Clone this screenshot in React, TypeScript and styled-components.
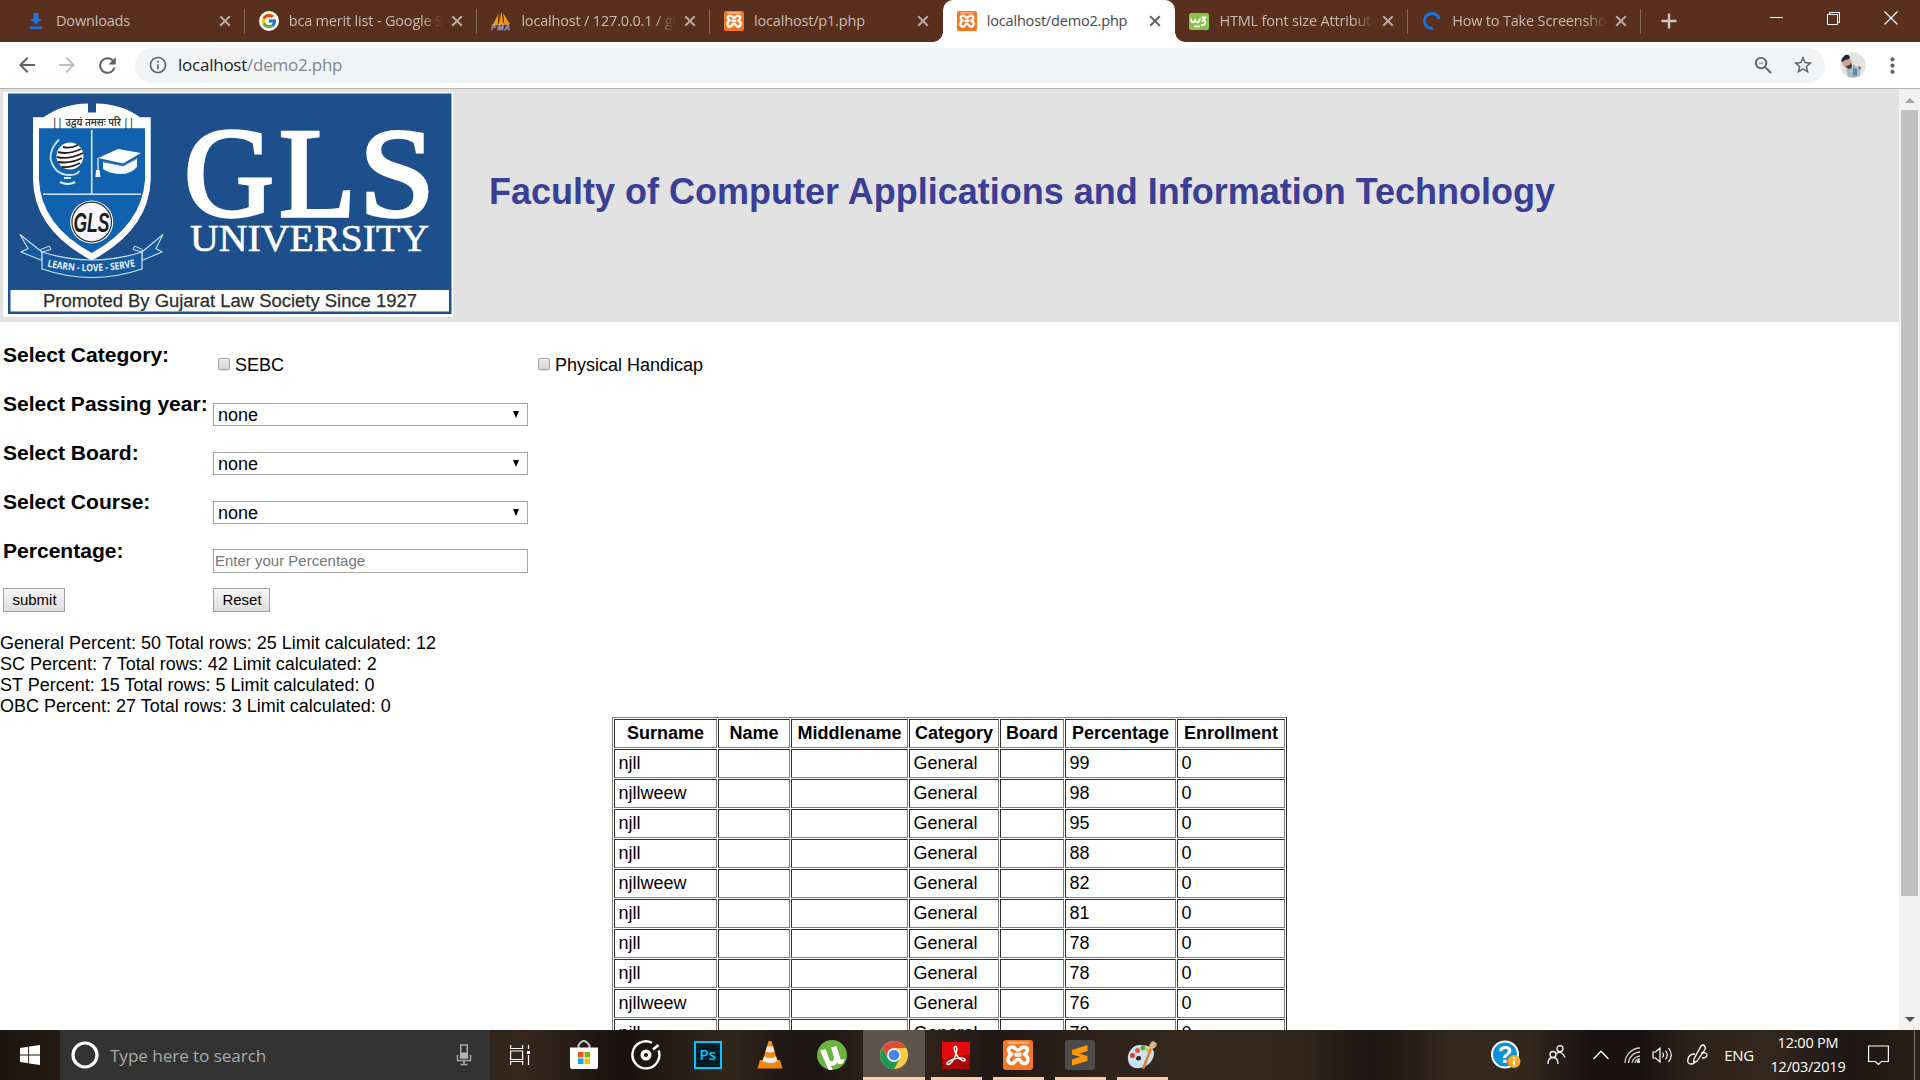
import React from "react";
import styled, { createGlobalStyle } from "styled-components";
import { FcGoogle } from "react-icons/fc";
import {
  MdArrowBack,
  MdArrowForward,
  MdRefresh,
  MdInfoOutline,
  MdZoomOut,
  MdStarBorder,
  MdMoreVert,
} from "react-icons/md";

const GlobalStyle = createGlobalStyle`
  * { box-sizing: border-box; }
  body { margin: 0; overflow: hidden; background: #fff; }
`;

const UI_FONT = `"Open Sans", "Noto Sans", sans-serif`;

const Screen = styled.div`
  width: 1920px;
  height: 1080px;
  display: flex;
  flex-direction: column;
  overflow: hidden;
  font-family: "Liberation Sans", Arial, sans-serif;
  color: #000;
`;

/* ---------- browser chrome ---------- */

const TabStrip = styled.div`
  flex: none;
  height: 42px;
  display: flex;
  align-items: stretch;
  padding-left: 12px;
  background: #59301e;
  font-family: ${UI_FONT};
`;

const Tab = styled.div<{ $active?: boolean; $separator?: boolean }>`
  position: relative;
  width: 232.7px;
  display: flex;
  align-items: center;
  padding: 0 11px 0 14px;
  background: ${(p) => (p.$active ? "#fff" : "transparent")};
  color: ${(p) => (p.$active ? "#45474a" : "#c8bab3")};
  border-radius: 10px 10px 0 0;
  &::after {
    content: "";
    display: ${(p) => (p.$separator ? "block" : "none")};
    position: absolute;
    right: 0;
    top: 9px;
    width: 1px;
    height: 25px;
    background: #836a5f;
  }
`;

const TabFoot = styled.i<{ $side: "left" | "right" }>`
  position: absolute;
  bottom: 0;
  ${(p) => p.$side}: -10px;
  width: 10px;
  height: 10px;
  background: radial-gradient(
    circle at ${(p) => (p.$side === "left" ? "0 0" : "10px 0")},
    transparent 9.5px,
    #fff 10px
  );
`;

const TabIcon = styled.span`
  flex: none;
  width: 20px;
  height: 20px;
  margin-right: 10px;
  display: flex;
  align-items: center;
  justify-content: center;
`;

const TabTitle = styled.span<{ $fade?: boolean }>`
  flex: 1;
  overflow: hidden;
  white-space: nowrap;
  font-size: 14.5px;
  line-height: 24px;
  letter-spacing: -0.18px;
  margin-top: -1px;
  ${(p) => p.$fade && "mask-image: linear-gradient(90deg, #000 86%, transparent 100%);"}
`;

const TabClose = styled.span`
  flex: none;
  width: 18px;
  height: 18px;
  margin-left: 5px;
  display: flex;
  align-items: center;
  justify-content: center;
`;

const NewTab = styled.div`
  width: 56px;
  display: flex;
  align-items: center;
  justify-content: center;
`;

const WindowButtons = styled.div`
  margin-left: auto;
  display: flex;
  height: 36px;
  padding-right: 1px;
`;

const WindowButton = styled.div`
  width: 57px;
  display: flex;
  align-items: center;
  justify-content: center;
`;

const Toolbar = styled.div`
  flex: none;
  height: 47px;
  display: flex;
  align-items: center;
  padding-left: 7px;
  background: #fff;
  border-bottom: 1px solid #b5b5b5;
`;

const NavButton = styled.div<{ $disabled?: boolean }>`
  width: 40px;
  display: flex;
  justify-content: center;
  color: ${(p) => (p.$disabled ? "#bcbec0" : "#5f6368")};
`;

const Omnibox = styled.div`
  width: 1690px;
  height: 35px;
  margin-left: 8px;
  padding: 0 10px 0 13px;
  display: flex;
  align-items: center;
  border-radius: 18px;
  background: #f1f3f4;
  color: #5f6368;
  font-family: ${UI_FONT};
`;

const Url = styled.span`
  flex: 1;
  margin-left: 10px;
  margin-top: -1px;
  font-size: 17px;
  letter-spacing: -0.24px;
  color: #80868b;
  b { font-weight: 400; color: #202124; }
`;

const OmniAction = styled.span`
  width: 40px;
  display: flex;
  justify-content: center;
  &:last-child { width: 24px; margin-left: 8px; }
`;

const AvatarSlot = styled.div`
  width: 55px;
  display: flex;
  justify-content: center;
`;

/* ---------- page ---------- */

const Viewport = styled.div`
  flex: 1;
  min-height: 0;
  display: flex;
  overflow: hidden;
`;

const Page = styled.main`
  width: 1899px;
  overflow: hidden;
  font-size: 18px;
  line-height: 21px;
`;

const Banner = styled.header`
  height: 233px;
  padding: 3px;
  display: flex;
  background: #e2e2e2;
`;

const BannerTitle = styled.h1`
  margin: 79px 0 0 36px;
  font-size: 36px;
  line-height: 42px;
  white-space: nowrap;
  color: #3a3f95;
`;

const Form = styled.form`
  height: 311px;
  padding: 8px 3px 0;
`;

const Field = styled.div`
  height: 49px;
  display: grid;
  grid-template-columns: 210px 315px auto;
  align-items: end;
`;

const Label = styled.h3`
  align-self: center;
  margin: 0;
  font-size: 21.06px;
  line-height: 24px;
  white-space: nowrap;
`;

const Check = styled.label<{ $indent: number }>`
  display: flex;
  align-items: center;
  gap: 5px;
  padding-left: ${(p) => p.$indent}px;
  margin-bottom: 3px;
`;

const CheckBox = styled.i`
  width: 12px;
  height: 12px;
  margin-top: -4px;
  border: 1px solid #a5a5a5;
  border-radius: 2px;
  background: linear-gradient(#e9e9e9, #d9d9d9);
  box-shadow: 0 1px 1px #ddd;
`;

const Select = styled.div`
  height: 23px;
  margin-bottom: 2px;
  padding: 1px 8px 0 4px;
  display: flex;
  align-items: center;
  justify-content: space-between;
  border: 1px solid #a6a6a6;
  background: #fff;
`;

const Caret = styled.i`
  width: 0;
  height: 0;
  margin-top: -2px;
  border: 3.5px solid transparent;
  border-top: 7px solid #000;
  border-bottom: 0;
`;

const Input = styled.input`
  width: 315px;
  height: 24px;
  margin: 0 0 2px;
  padding: 0 1px 2px;
  border: 1px solid #a6a6a6;
  font: 15px "Liberation Sans", Arial, sans-serif;
  &::placeholder { color: #757575; }
`;

const Buttons = styled.div`
  display: grid;
  grid-template-columns: 210px 315px;
  justify-items: start;
  padding-top: 13px;
`;

const Button = styled.button<{ $width: number }>`
  width: ${(p) => p.$width}px;
  height: 24px;
  padding: 0 0 2px 1px;
  border: 1px solid #a0a0a0;
  border-radius: 0;
  background: linear-gradient(#f6f6f6, #dedede);
  color: #000;
  font: 15px "Liberation Sans", Arial, sans-serif;
`;

const Summary = styled.div`
  white-space: nowrap;
`;

const Results = styled.table`
  width: 675px;
  margin: 0 auto;
  table-layout: fixed;
  border-collapse: separate;
  border-spacing: 1px;
  border: 1px solid;
  border-color: #808080 #2c2c2c #2c2c2c #808080;
  font-size: 18px;
  line-height: 21px;
`;

const cell = `
  height: 29px;
  padding: 0 3px 1px 3.5px;
  border: 1px solid;
  border-color: #2c2c2c #808080 #808080 #2c2c2c;
  white-space: nowrap;
`;
const Th = styled.th`${cell} padding-left: 0; padding-right: 0; text-align: center;`;
const Td = styled.td`${cell}`;
const Col = styled.col<{ $w: number }>`width: ${(p) => p.$w}px;`;

const Scrollbar = styled.div`
  width: 21px;
  display: flex;
  flex-direction: column;
  align-items: center;
  background: #f1f1f1;
`;

const ScrollArrow = styled.div<{ $down?: boolean }>`
  width: 21px;
  height: 21px;
  display: flex;
  align-items: center;
  justify-content: center;
  margin-top: ${(p) => (p.$down ? "auto" : "0")};
  &::before {
    content: "";
    border: 5px solid transparent;
    ${(p) =>
      p.$down
        ? "border-top-color: #505050; border-bottom: 0;"
        : "border-bottom-color: #a3a3a3; border-top: 0; margin-top: 2px;"}
  }
`;

const Thumb = styled.div`
  width: 17px;
  height: 786px;
  background: #c1c1c1;
`;

/* ---------- taskbar ---------- */

const Taskbar = styled.footer`
  flex: none;
  height: 50px;
  display: flex;
  align-items: stretch;
  color: #fff;
  font-family: ${UI_FONT};
  background: linear-gradient(
    90deg,
    #1a1410 0, #241a13 50px, #30241a 490px, #36281d 520px, #221814 590px, #17110f 625px,
    #2b2018 690px, #32261c 730px, #1e1614 790px, #1d1514 820px, #33261c 890px, #2a1f18 960px,
    #201715 990px, #2c211a 1080px, #35281e 1180px, #33261c 1300px, #1c1513 1370px,
    #281d17 1410px, #35281e 1450px, #33261c 1530px, #181312 1590px, #171211 1640px,
    #2d2119 1690px, #35281e 1770px, #1b1513 1850px, #2b2018 1920px
  );
`;

const StartButton = styled.div`
  width: 60px;
  display: flex;
  align-items: center;
  justify-content: center;
`;

const SearchBox = styled.div`
  width: 430px;
  display: flex;
  align-items: center;
  padding: 0 18px 0 10px;
  background: #333;
  color: #a9a9a9;
  font-size: 17.2px;
  letter-spacing: -0.1px;
`;

const SearchText = styled.span`
  flex: 1;
  margin-left: 10px;
`;

const TaskViewSlot = styled.div`
  width: 63px;
  display: flex;
  align-items: center;
  padding-left: 20px;
`;

const TaskSlot = styled.div<{ $focused?: boolean; $open?: boolean }>`
  position: relative;
  width: 62px;
  display: flex;
  align-items: center;
  justify-content: center;
  background: ${(p) => (p.$focused ? "#5d544d" : "transparent")};
  &::after {
    content: "";
    display: ${(p) => (p.$open ? "block" : "none")};
    position: absolute;
    bottom: 0;
    left: ${(p) => (p.$focused ? 0 : 6)}px;
    right: ${(p) => (p.$focused ? 0 : 5)}px;
    height: 3px;
    background: #fbcbac;
  }
`;

const Tray = styled.div`
  margin-left: auto;
  display: flex;
  align-items: center;
`;

const TraySlot = styled.div<{ $w: number }>`
  width: ${(p) => p.$w}px;
  display: flex;
  justify-content: center;
  font-size: 15px;
  letter-spacing: -0.3px;
`;

const Clock = styled.div`
  width: 92px;
  text-align: center;
  font-size: 14.5px;
  line-height: 24px;
  letter-spacing: -0.2px;
  white-space: nowrap;
`;

const NotificationSlot = styled.div`
  width: 60px;
  display: flex;
  padding-left: 14px;
`;

const ShowDesktop = styled.div`
  width: 6px;
  align-self: stretch;
  border-left: 1px solid #77706b;
`;

/* ---------- drawings ---------- */

const LogoSvg = styled.svg`
  flex: none;
`;

const Cross = ({ color }: { color: string }) => (
  <svg width="12" height="12" viewBox="0 0 12 12">
    <path d="M1.2 1.2 10.8 10.8M10.8 1.2 1.2 10.8" stroke={color} strokeWidth="2" />
  </svg>
);

const DownloadIcon = () => (
  <svg width="14" height="16" viewBox="0 0 14 16">
    <path d="M4.5 0h5v6h3.5L7 11.5 1 6h3.5zM1 13.5h12V16H1z" fill="#1a73e8" />
  </svg>
);

const GoogleIcon = () => (
  <svg width="20" height="20" viewBox="0 0 20 20">
    <circle cx="10" cy="10" r="10" fill="#fff" />
    <g transform="translate(1.5 1.5)"><FcGoogle size={17} /></g>
  </svg>
);

const PmaIcon = () => (
  <svg width="21" height="20" viewBox="0 0 21 20">
    <path d="M8 2 2 14h5zM11 0 8 14l5-1zM13 2l1 11 5-1z" fill="#f89c0e" />
    <path d="M1 13.5 20 12l-1 2H2z" fill="#e3a64c" />
    <text x="0" y="19.6" fontFamily="Liberation Sans" fontSize="8" fontWeight="700" fontStyle="italic" textLength="20" fill="#4f5688" stroke="#d5d3e0" strokeWidth=".35">PMA</text>
  </svg>
);

const XamppIcon = ({ size }: { size: number }) => (
  <svg width={size} height={size} viewBox="0 0 30 30">
    <rect width="30" height="30" rx="3" fill="#f37623" />
    <path d="M4 1.5h22l-1.5 2.5h-19z" fill="#f9ad7c" />
    <path
      d="M11 7.5c-3.6-1.4-6.2.8-5.2 3.6.5 1.4 1.5 2.2 2.8 3-2.6 1.5-4.2 4.3-3.2 7 1.1 2.9 4.5 3.2 6.3.8 1-1.3 1-2.7 3.3-2.7s2.3 1.4 3.3 2.7c1.8 2.4 5.2 2.1 6.3-.8 1-2.7-.6-5.5-3.2-7 1.3-.8 2.3-1.6 2.8-3 1-2.8-1.6-5-5.2-3.6-1.5.6-1.7 2.7-4 2.7s-2.5-2.1-4-2.7z"
      fill="none"
      stroke="#fff"
      strokeWidth="3.6"
      strokeLinejoin="round"
    />
    <path d="M11.5 14.7h7" stroke="#fff" strokeWidth="4" />
  </svg>
);

const W3Icon = () => (
  <svg width="20" height="17" viewBox="0 0 20 17">
    <rect width="20" height="17" rx="2" fill="#8bc34a" />
    <path d="M2 5.5c0 5 4 5 4 .5 0 4.5 4 4.5 5-.5M12.5 4.5h4l-2.5 3c3 0 3.5 4-.5 4.5h-1.5M5 13.300h6" fill="none" stroke="#fff" strokeWidth="1.8" />
  </svg>
);

const Spinner = () => (
  <svg width="20" height="20" viewBox="0 0 20 20">
    <path d="M17.2 8A7.5 7.5 0 1 0 11 17.3" fill="none" stroke="#1a73e8" strokeWidth="2.8" />
  </svg>
);

const Avatar = () => (
  <svg width="26" height="26" viewBox="0 0 26 26">
    <clipPath id="avatar"><circle cx="13" cy="13" r="12.7" /></clipPath>
    <g clipPath="url(#avatar)">
      <rect width="26" height="26" fill="#dfe5df" />
      <path d="M6 16c3 1 6-1 7-4l6 4 2 10H8z" fill="#a6bdc8" />
      <path d="M2 9c1-3 7-5 9-1 2 4 0 9-3 9s-6-5-6-8z" fill="#d2a38c" />
      <path d="M1 8C2 3 8 1 10 5l-1 2-4 1-3 2z" fill="#20253a" />
      <path d="M6 14c2 0 4-1 5-3l1 3c-1 4-4 4-6 0z" fill="#4a3532" />
      <path d="M13 16l4 1v6l-4 1z" fill="#6489a5" />
      <path d="M18 14l3 1-1 4z" fill="#8b6154" />
    </g>
  </svg>
);

const UniversityLogo = () => (
  <LogoSvg width="450" height="225" viewBox="3 92 450 225">
    <rect x="3" y="92" width="450" height="225" fill="#fff" />
    <rect x="8" y="93.5" width="443.500" height="220.500" fill="#1c4f8b" />
    <rect x="10.5" y="290" width="438.500" height="21.5" fill="#fff" />
    <path d="M33 117.3h10.5Q62 104 88 103.500V112.500h8V103.500Q122 104 140 117.3h10.700V180Q149 230 91.700 260.500 34 230 33 180z" fill="#fff" />
    <path d="M39 128.300h106V180q-3 45-53.300 73Q41 225 39 180z" fill="#1061ae" />
    <path d="M91.700 130v64M43 194.300h98" stroke="#d7e9f8" strokeWidth="1.6" />
    <text x="52" y="125.500" fontFamily="Noto Sans, sans-serif" fontSize="11" fontWeight="600" textLength="82" lengthAdjust="spacingAndGlyphs" fill="#333">|| उद्वयं तमसः परि ||</text>
    {/* globe */}
    <circle cx="70" cy="156" r="13.500" fill="#fff" />
    <path d="M63 147q7 2 15-2M58 152q10 3 23-3M57 157q12 3 26-4M58 162q12 2 24-4M62 167q9 1 18-4" fill="none" stroke="#222" strokeWidth="1.9" />
    <path d="M59 139.500q-9 9-8.500 19 4 17 20 16.500 6 0 9-4" fill="none" stroke="#cfe5f6" strokeWidth="1.8" />
    <path d="M60 182q8 4 15 0M64 178h7" fill="none" stroke="#e9f5ff" strokeWidth="2.2" />
    {/* mortarboard */}
    <path d="M98 158l20-9 23 4-18 10.500z" fill="#fff" />
    <path d="M103 162l20 4 14-8v9q-7 8-19 7-10-1-15-5z" fill="#f3f7fb" />
    <path d="M103 161.500l20 4.500 15-8" fill="none" stroke="#5b7ea5" strokeWidth="1" />
    <path d="M98 158v12" stroke="#fff" strokeWidth="1.2" />
    <path d="M96 170h3.500l1 7h-5z" fill="#fff" />
    {/* roundel */}
    <circle cx="91.700" cy="222" r="21.500" fill="#fff" />
    <circle cx="91.700" cy="222" r="19.800" fill="#f6f6f6" stroke="#333" strokeWidth="1.200" />
    <text x="73.500" y="232" fontFamily="Liberation Sans" fontSize="27" fontStyle="italic" fontWeight="700" textLength="36" lengthAdjust="spacingAndGlyphs" fill="#1d1d1d">GLS</text>
    {/* ribbon */}
    <path d="M42 252 20 234.500l8 14-7 3.500 21 8.500zM142 252l21-17.500-7 14 6 3.500-20 8.500z" fill="#1559a0" stroke="#cfe3f5" strokeWidth="1.100" />
    <path d="M42 252l9-2.500-1.500-3.500-9 3.500zM142 252l-9-2.500 1.500-3.500 8 3.500z" fill="#1559a0" stroke="#cfe3f5" strokeWidth="1" />
    <path d="M42 252q50 16 100 0v17q-50 17-100 0z" fill="#1559a0" stroke="#cfe3f5" strokeWidth="1.200" />
    <path id="motto" d="M47 266.500q45 10 92-1" fill="none" />
    <text fontFamily="Open Sans" fontSize="10" fontWeight="700" fill="#e8f5ff">
      <textPath href="#motto" textLength="89" lengthAdjust="spacingAndGlyphs">LEARN - LOVE - SERVE</textPath>
    </text>
    <g fill="#fff" stroke="#fff" fontFamily="Liberation Serif, serif">
      <g fontSize="127" strokeWidth="3.400">
        <text x="184" y="215.500" textLength="90" lengthAdjust="spacingAndGlyphs">G</text>
        <text x="279" y="215.500" textLength="77" lengthAdjust="spacingAndGlyphs">L</text>
        <text x="359" y="215.500" textLength="76" lengthAdjust="spacingAndGlyphs">S</text>
      </g>
      <text x="190" y="251" fontSize="38" strokeWidth=".6" textLength="239" lengthAdjust="spacingAndGlyphs">UNIVERSITY</text>
    </g>
    <text x="43" y="307" fontFamily="Liberation Sans" fontSize="18" textLength="374" lengthAdjust="spacingAndGlyphs" fill="#2d2d2d" stroke="#2d2d2d" strokeWidth=".25">Promoted By Gujarat Law Society Since 1927</text>
  </LogoSvg>
);

const WindowsIcon = () => (
  <svg width="20" height="20" viewBox="0 0 20 20" fill="#fff">
    <path d="M0 2.900 8.200 1.700v7.800H0zM9.100 1.600 20 0v9.500H9.100zM0 10.400h8.200v7.900L0 17.100zM9.100 10.400H20V20L9.100 18.400z" />
  </svg>
);

const MicIcon = () => (
  <svg width="16" height="22" viewBox="0 0 16 22">
    <rect x="4.700" y="1" width="6.600" height="13" fill="#333" stroke="#b4b4b4" strokeWidth="1.400" />
    <path d="M4.500 8.500h7V14h-7z" fill="#b4b4b4" />
    <path d="M1.500 11v5.500h13V11M8 16.500v4M4.500 20.500h7" fill="none" stroke="#a5a5a5" strokeWidth="1.500" />
  </svg>
);

const TaskViewIcon = () => (
  <svg width="20" height="20" viewBox="0 0 20 20" fill="none" stroke="#fff" strokeWidth="1.200">
    <path d="M.6 0v3.500h12V0M.6 20v-3.500h12V20M.6 6h12v8.500H.6zM18.500 0v4M18.500 10v10" />
    <path d="M17 6h3v3h-3z" fill="#fff" stroke="none" />
  </svg>
);

const StoreIcon = () => (
  <svg width="30" height="30" viewBox="0 0 30 30">
    <path d="M9.500 8V5.500q5-9 11 0V8" fill="none" stroke="#c8c8c8" strokeWidth="2" />
    <path d="M1 7.500h28V27q0 2-2 2H3q-2 0-2-2z" fill="#fff" />
    <path d="M9 12h5.500v5.500H9z" fill="#f25022" />
    <path d="M15.500 12H21v5.500h-5.500z" fill="#7fba00" />
    <path d="M9 18.500h5.500V24H9z" fill="#00a4ef" />
    <path d="M15.500 18.500H21V24h-5.500z" fill="#ffb900" />
  </svg>
);

const GrooveIcon = () => (
  <svg width="30" height="30" viewBox="0 0 30 30" fill="none" stroke="#fff">
    <path d="M21 2.800A13.500 13.500 0 1 0 27.700 10.500" strokeWidth="2.400" />
    <circle cx="15" cy="15" r="3.800" strokeWidth="3.400" />
    <path d="M22 9.500 27.500 5" strokeWidth="2.800" />
  </svg>
);

const PhotoshopIcon = () => (
  <svg width="28" height="28" viewBox="0 0 28 28">
    <rect x="1" y="1" width="26" height="26" fill="#001d26" stroke="#00c8ff" strokeWidth="2" />
    <text x="5.500" y="19" fontFamily="Open Sans" fontSize="15" fontWeight="600" textLength="16.500" lengthAdjust="spacingAndGlyphs" fill="#00c8ff">Ps</text>
  </svg>
);

const VlcIcon = () => (
  <svg width="26" height="30" viewBox="0 0 26 30">
    <path d="M3 20h20l2.500 8.500H.5z" fill="#f08710" />
    <path d="M11.500 1h3L21 23q-8 5-16 0z" fill="#f58a12" />
    <path d="M10 6.500h6l1.500 5q-4.500 2-9 0zM7 16.500q6 3 12 0l1.500 4.500q-7.500 4-15 0z" fill="#ececec" />
  </svg>
);

const UtorrentIcon = () => (
  <svg width="30" height="30" viewBox="0 0 30 30">
    <circle cx="15" cy="15" r="15" fill="#6cb33f" />
    <path d="M3 10.500 8.500 9l4.500 12q4.500 1 4-4L14 7.500 19.500 6l4 13q1.500 1.500 4-.5l-1 4.500q-4 2.500-6.500-.5-2 4-6 3L15.500 30h-4z" fill="#fff" />
  </svg>
);

const ChromeIcon = () => (
  <svg width="28" height="28" viewBox="0 0 28 28">
    <circle cx="14" cy="14" r="14" fill="#fbcb45" />
    <path d="M1.900 7A14 14 0 0 1 26.100 7H14a7 7 0 0 0-6.060 10.500z" fill="#df4b3c" />
    <path d="M1.900 7A14 14 0 0 0 14 28l6.060-10.500A7 7 0 0 1 7.940 17.500z" fill="#1a9a56" />
    <circle cx="14" cy="14" r="6.800" fill="#f4f4f4" />
    <circle cx="14" cy="14" r="5.300" fill="#4585ee" />
  </svg>
);

const AcrobatIcon = () => (
  <svg width="28" height="27" viewBox="0 0 28 27">
    <rect width="28" height="27" fill="#a80508" />
    <path d="M0 0h28v12L0 17z" fill="#e5090c" />
    <path d="M13 4.500c3-1 2 6-.5 11.500S6 23.500 5 22s4-4.500 9-5.500 9.500-.5 9 1.500-5 .5-8-4.500-3.500-8.500-2-9z" fill="none" stroke="#fff" strokeWidth="1.500" />
  </svg>
);

const SublimeIcon = () => (
  <svg width="30" height="30" viewBox="0 0 30 30">
    <rect width="30" height="30" rx="2.500" fill="#4b4b4b" />
    <path d="M7 10 22.500 5v6L14 13.700l8.500 2.300v5L7 25.500v-6l8.500-2.700L7 14.500z" fill="#ff9800" />
  </svg>
);

const PaintIcon = () => (
  <svg width="30" height="30" viewBox="0 0 30 30">
    <path d="M13 5C5 5 0 13 1 20c1 6 6 9 12 8 8-1 14-8 14-15 0-5-6-8-14-8zm-1 11c3 0 3 4.500-.5 4.500S8 16 12 16z" fill="#c9e2f3" fillRule="evenodd" />
    <circle cx="5.500" cy="15.500" r="2.500" fill="#e0392d" />
    <circle cx="10.500" cy="10.500" r="2.500" fill="#e0574a" />
    <circle cx="16" cy="8" r="2.500" fill="#53ad39" />
    <circle cx="21" cy="10.500" r="2.200" fill="#efb92c" />
    <path d="M15 28 23 8l2 1-7 19q-2 2-3 0z" fill="#d98134" />
    <path d="M22 8q0-5 4-7l3.500 2q1 4-4 6z" fill="#d8b48b" />
  </svg>
);

const HelpIcon = () => (
  <svg width="30" height="32" viewBox="0 0 30 32">
    <circle cx="14" cy="15.500" r="13" fill="#0b92d8" stroke="#fff" strokeWidth="2" />
    <text x="14" y="24" textAnchor="middle" fontFamily="Liberation Sans" fontSize="24" fontWeight="700" fill="#fff">?</text>
    <circle cx="23" cy="22.500" r="6.500" fill="#f7ad1a" />
    <path d="M23 18v2M23 21.500v5" stroke="#fff" strokeWidth="2" />
  </svg>
);

const PeopleIcon = () => (
  <svg width="20" height="20" viewBox="0 0 20 20" fill="none" stroke="#fff" strokeWidth="1.300">
    <circle cx="13" cy="3.700" r="3" />
    <circle cx="6" cy="9.500" r="3" />
    <path d="M1 19q0-6.500 5-6.500t5 6.500M9.500 8.500q5-3.500 8.500 4" />
  </svg>
);

const WifiIcon = () => (
  <svg width="17" height="18" viewBox="0 0 17 18" fill="none" stroke="#d2cfcd" strokeWidth="1.300">
    <path d="M1 17A15.500 15.500 0 0 1 16 2M4.500 17A12 12 0 0 1 16 6M8 17a8.500 8.500 0 0 1 8-7M11 17a5 5 0 0 1 5-4" />
    <circle cx="14.500" cy="15.500" r="1.500" fill="#fff" stroke="none" />
  </svg>
);

const VolumeIcon = () => (
  <svg width="21" height="18" viewBox="0 0 21 18" fill="none" stroke="#fff" strokeWidth="1.200">
    <path d="M1 6h2.500L8 2v14l-4.500-4H1zM10.500 6.500q2 2.500 0 5M13.500 4.500q3.500 4.500 0 9M16.500 2q5.500 7 0 14" />
  </svg>
);

const PenIcon = () => (
  <svg width="21" height="22" viewBox="0 0 21 22" fill="none" stroke="#fff" strokeWidth="1.300">
    <path d="M7 15 14 2q2-2 3.500 0t.5 3.500L10 17l-3.500 2z" />
    <path d="M8 10q-6 0-7 5t3 5 3-3M14 9q6-1 6 2t-5 3" />
  </svg>
);

/* ---------- content ---------- */

const tabs = [
  { icon: <DownloadIcon />, title: "Downloads" },
  { icon: <GoogleIcon />, title: "bca merit list - Google Search", fade: true },
  { icon: <PmaIcon />, title: "localhost / 127.0.0.1 / gls", fade: true },
  { icon: <XamppIcon size={20} />, title: "localhost/p1.php" },
  { icon: <XamppIcon size={20} />, title: "localhost/demo2.php", active: true },
  { icon: <W3Icon />, title: "HTML font size Attribute", fade: true },
  { icon: <Spinner />, title: "How to Take Screenshots", fade: true },
];

const summary = [
  "General Percent: 50 Total rows: 25 Limit calculated: 12",
  "SC Percent: 7 Total rows: 42 Limit calculated: 2",
  "ST Percent: 15 Total rows: 5 Limit calculated: 0",
  "OBC Percent: 27 Total rows: 3 Limit calculated: 0",
];

const columns: [string, number][] = [
  ["Surname", 103],
  ["Name", 72],
  ["Middlename", 117],
  ["Category", 90],
  ["Board", 64],
  ["Percentage", 111],
  ["Enrollment", 108],
];

const rows: [string, number][] = [
  ["njll", 99],
  ["njllweew", 98],
  ["njll", 95],
  ["njll", 88],
  ["njllweew", 82],
  ["njll", 81],
  ["njll", 78],
  ["njll", 78],
  ["njllweew", 76],
  ["njll", 73],
];

const apps: { icon: React.ReactNode; open?: boolean; focused?: boolean }[] = [
  { icon: <StoreIcon /> },
  { icon: <GrooveIcon /> },
  { icon: <PhotoshopIcon /> },
  { icon: <VlcIcon /> },
  { icon: <UtorrentIcon /> },
  { icon: <ChromeIcon />, open: true, focused: true },
  { icon: <AcrobatIcon />, open: true },
  { icon: <XamppIcon size={30} />, open: true },
  { icon: <SublimeIcon />, open: true },
  { icon: <PaintIcon />, open: true },
];

export default function App() {
  return (
    <Screen>
      <GlobalStyle />
      <TabStrip>
        {tabs.map((t, i) => (
          <Tab key={i} $active={t.active} $separator={!t.active && i !== 3}>
            {t.active && <TabFoot $side="left" />}
            <TabIcon>{t.icon}</TabIcon>
            <TabTitle $fade={t.fade}>{t.title}</TabTitle>
            <TabClose><Cross color={t.active ? "#5f6368" : "#b6aaa4"} /></TabClose>
            {t.active && <TabFoot $side="right" />}
          </Tab>
        ))}
        <NewTab>
          <svg width="16" height="16" viewBox="0 0 16 16">
            <path d="M8 .5v15M.5 8h15" stroke="#cfc6c1" strokeWidth="2.4" />
          </svg>
        </NewTab>
        <WindowButtons>
          <WindowButton>
            <svg width="13" height="13"><path d="M0 5.500h13" stroke="#fff" /></svg>
          </WindowButton>
          <WindowButton>
            <svg width="13" height="13" fill="none" stroke="#fff">
              <path d="M.5 2.500h10v10H.5zM2.500 2.500v-2h10v10h-2" />
            </svg>
          </WindowButton>
          <WindowButton>
            <svg width="14" height="14"><path d="M.5.5l13 13M13.500.5l-13 13" stroke="#fff" strokeWidth="1.2" /></svg>
          </WindowButton>
        </WindowButtons>
      </TabStrip>

      <Toolbar>
        <NavButton><MdArrowBack size={24} /></NavButton>
        <NavButton $disabled><MdArrowForward size={24} /></NavButton>
        <NavButton><MdRefresh size={25} /></NavButton>
        <Omnibox>
          <MdInfoOutline size={20} />
          <Url><b>localhost</b>/demo2.php</Url>
          <OmniAction><MdZoomOut size={23} /></OmniAction>
          <OmniAction><MdStarBorder size={22} /></OmniAction>
        </Omnibox>
        <AvatarSlot><Avatar /></AvatarSlot>
        <MdMoreVert size={25} color="#5f6368" />
      </Toolbar>

      <Viewport>
        <Page>
          <Banner>
            <UniversityLogo />
            <BannerTitle>Faculty of Computer Applications and Information Technology</BannerTitle>
          </Banner>
          <Form>
            <Field>
              <Label>Select Category:</Label>
              <Check $indent={5}><CheckBox />SEBC</Check>
              <Check $indent={10}><CheckBox />Physical Handicap</Check>
            </Field>
            {["Select Passing year:", "Select Board:", "Select Course:"].map((l) => (
              <Field key={l}>
                <Label>{l}</Label>
                <Select>none<Caret /></Select>
              </Field>
            ))}
            <Field>
              <Label>Percentage:</Label>
              <Input placeholder="Enter your Percentage" />
            </Field>
            <Buttons>
              <Button type="button" $width={62}>submit</Button>
              <Button type="button" $width={57}>Reset</Button>
            </Buttons>
          </Form>
          <Summary>
            {summary.map((s) => <div key={s}>{s}</div>)}
          </Summary>
          <Results>
            <colgroup>{columns.map(([n, w]) => <Col key={n} $w={w} />)}</colgroup>
            <thead>
              <tr>{columns.map(([n]) => <Th key={n}>{n}</Th>)}</tr>
            </thead>
            <tbody>
              {rows.map(([name, pct], i) => (
                <tr key={i}>
                  <Td>{name}</Td><Td /><Td /><Td>General</Td><Td /><Td>{pct}</Td><Td>0</Td>
                </tr>
              ))}
            </tbody>
          </Results>
        </Page>
        <Scrollbar>
          <ScrollArrow />
          <Thumb />
          <ScrollArrow $down />
        </Scrollbar>
      </Viewport>

      <Taskbar>
        <StartButton><WindowsIcon /></StartButton>
        <SearchBox>
          <svg width="30" height="30" viewBox="0 0 30 30">
            <circle cx="15" cy="15" r="12" fill="none" stroke="#fff" strokeWidth="3.2" />
          </svg>
          <SearchText>Type here to search</SearchText>
          <MicIcon />
        </SearchBox>
        <TaskViewSlot><TaskViewIcon /></TaskViewSlot>
        {apps.map((a, i) => (
          <TaskSlot key={i} $open={a.open} $focused={a.focused}>{a.icon}</TaskSlot>
        ))}
        <Tray>
          <TraySlot $w={50}><HelpIcon /></TraySlot>
          <TraySlot $w={52}><PeopleIcon /></TraySlot>
          <TraySlot $w={36}>
            <svg width="16" height="10"><path d="M.5 9 8 1.200 15.500 9" fill="none" stroke="#fff" strokeWidth="1.3" /></svg>
          </TraySlot>
          <TraySlot $w={27}><WifiIcon /></TraySlot>
          <TraySlot $w={32}><VolumeIcon /></TraySlot>
          <TraySlot $w={38}><PenIcon /></TraySlot>
          <TraySlot $w={46}>ENG</TraySlot>
          <Clock>12:00 PM<br />12/03/2019</Clock>
          <NotificationSlot>
            <svg width="21" height="21" fill="none" stroke="#fff" strokeWidth="1.2">
              <path d="M.6 1h19.800v15.500h-7L10.500 19.500 7.500 16.500H.6z" />
            </svg>
          </NotificationSlot>
          <ShowDesktop />
        </Tray>
      </Taskbar>
    </Screen>
  );
}
